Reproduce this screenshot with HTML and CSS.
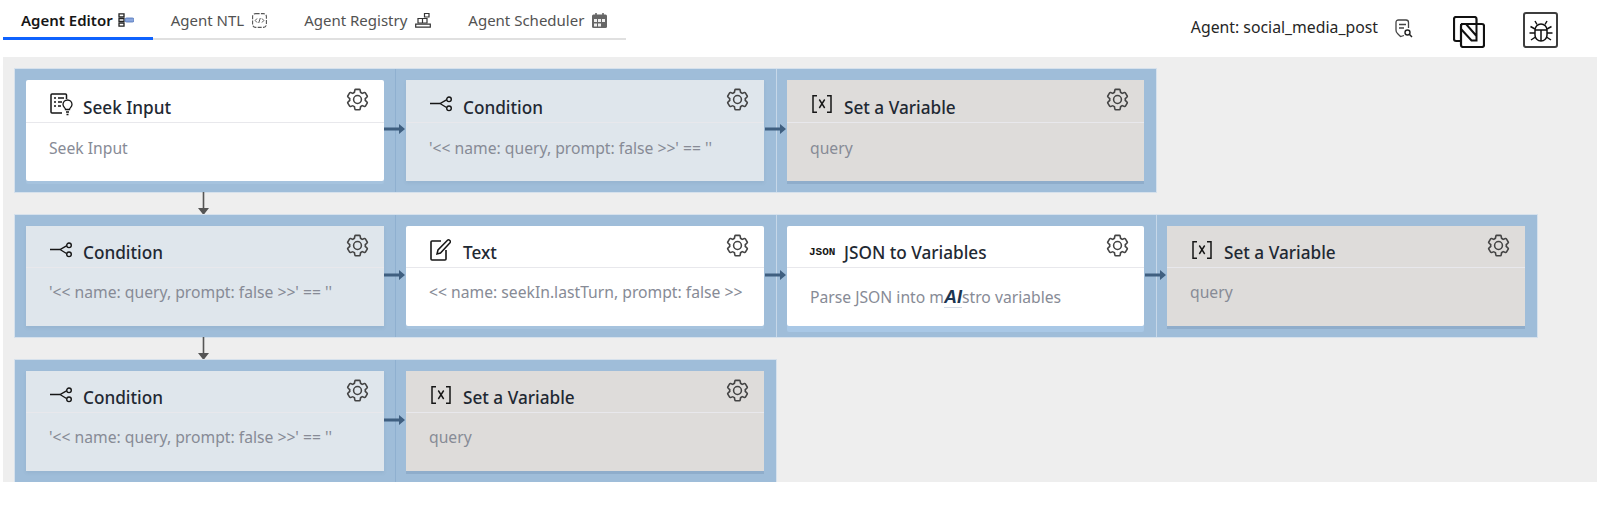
FILE: index.html
```html
<!DOCTYPE html>
<html lang="en">
<head>
    <meta charset="UTF-8">
    <title>Agent Editor</title>
    <link rel="stylesheet" href="styles.css">
</head>
<body>
    <svg class="defs" width="0" height="0">
        <symbol id="gear" viewBox="0 0 32 32">
            <path d="M27,16.76c0-.25,0-.5,0-.76s0-.51,0-.77l1.92-1.68A2,2,0,0,0,29.3,11L26.94,7a2,2,0,0,0-1.73-1,2,2,0,0,0-.64.1l-2.43.82a11.35,11.35,0,0,0-1.31-.75l-.51-2.52a2,2,0,0,0-2-1.61H13.64a2,2,0,0,0-2,1.61l-.51,2.52a11.48,11.48,0,0,0-1.32.75L7.43,6.06A2,2,0,0,0,6.79,6,2,2,0,0,0,5.06,7L2.7,11a2,2,0,0,0,.41,2.51L5,15.24c0,.25,0,.5,0,.76s0,.51,0,.77L3.11,18.45A2,2,0,0,0,2.7,21L5.06,25a2,2,0,0,0,1.73,1,2,2,0,0,0,.64-.1l2.43-.82a11.35,11.35,0,0,0,1.31.75l.51,2.52a2,2,0,0,0,2,1.61h4.72a2,2,0,0,0,2-1.61l.51-2.52a11.48,11.48,0,0,0,1.32-.75l2.42.82a2,2,0,0,0,.64.1,2,2,0,0,0,1.73-1L29.3,21a2,2,0,0,0-.41-2.51ZM25.21,24l-3.43-1.16a8.86,8.86,0,0,1-2.71,1.57L18.36,28H13.64l-.71-3.55a9.36,9.36,0,0,1-2.7-1.57L6.79,24,4.43,20l2.72-2.4a8.9,8.9,0,0,1,0-3.13L4.43,12,6.79,8l3.43,1.16a8.86,8.86,0,0,1,2.71-1.57L13.64,4h4.72l.71,3.55a9.36,9.36,0,0,1,2.7,1.57L25.21,8,27.57,12l-2.72,2.4a8.9,8.9,0,0,1,0,3.13L27.57,20Z"/>
            <path d="M16,22a6,6,0,1,1,6-6A5.94,5.94,0,0,1,16,22Zm0-10a3.91,3.91,0,0,0-4,4,3.91,3.91,0,0,0,4,4,3.91,3.91,0,0,0,4-4A3.91,3.91,0,0,0,16,12Z"/>
        </symbol>
        <symbol id="condition" viewBox="0 0 22 16">
            <path d="M0 7.500h10L16.500 3.800M10 7.500l6.500 4" fill="none" stroke="#161616" stroke-width="1.400"/>
            <circle cx="19" cy="3.300" r="2.300" fill="none" stroke="#161616" stroke-width="1.400"/>
            <circle cx="19" cy="12.300" r="2.300" fill="none" stroke="#161616" stroke-width="1.400"/>
        </symbol>
        <symbol id="variable" viewBox="0 0 20 18">
            <path d="M5 .8H1v16.400h4M15 .8h4v16.400h-4" fill="none" stroke="#161616" stroke-width="1.500"/>
            <path d="M7.300 4.500l5.400 8.500M12.700 4.500l-5.400 8.500" fill="none" stroke="#161616" stroke-width="1.400"/>
        </symbol>
        <symbol id="arrow-right" viewBox="0 0 21 12">
            <path d="M0 4.500h15V1l6 5-6 5V7.500H0z" fill="#3f5f80"/>
        </symbol>
    </svg>

    <header class="topbar">
        <nav class="tabs">
            <div class="tab active">
                <span>Agent Editor</span>
                <svg class="tab-icon" width="16" height="14" viewBox="0 0 16 14">
                    <path d="M1 .8h5v3H1zM1 5.500h5v3H1zM1 10.200h5v3H1z" fill="none" stroke="#222" stroke-width="1.300"/>
                    <rect x="7" y="5" width="9" height="4" rx="1.500" fill="#8aa6dc" stroke="#4a6fb8" stroke-width=".8"/>
                </svg>
            </div>
            <div class="tab">
                <span>Agent NTL</span>
                <svg class="tab-icon" width="15" height="15" viewBox="0 0 15 15">
                    <rect x=".6" y=".6" width="13.800" height="13.800" rx="3" fill="none" stroke="#555" stroke-width="1.100" stroke-dasharray="4 1.300"/>
                    <path d="M5 5.500L3.200 7.500 5 9.500M10 5.500l1.800 2-1.800 2M8.300 5l-1.600 5" fill="none" stroke="#444" stroke-width=".9"/>
                </svg>
            </div>
            <div class="tab">
                <span>Agent Registry</span>
                <svg class="tab-icon" width="16" height="16" viewBox="0 0 16 16">
                    <path d="M3 6.500h4.500V11H3zM7.500 6.500H12V11H7.500zM9.500 1.500H14V5H9.500z" fill="none" stroke="#333" stroke-width="1.200"/>
                    <path d="M.7 15.200v-3h14.600v3z" fill="none" stroke="#333" stroke-width="1.200"/>
                </svg>
            </div>
            <div class="tab">
                <span>Agent Scheduler</span>
                <svg class="tab-icon" width="15" height="15" viewBox="0 0 15 15">
                    <rect x="0" y="1.500" width="15" height="13.500" rx="1.500" fill="#666666"/>
                    <path d="M4 0v3M11 0v3" stroke="#666666" stroke-width="1.600"/>
                    <path d="M2 6h3v3H2zM6 6h3v3H6zM10 6h3v3h-3zM2 10.500h3v3H2zM6 10.500h3v3H6z" fill="#eeeeee"/>
                </svg>
            </div>
        </nav>
        <div class="agent-info">
            <span class="agent-name">Agent: social_media_post</span>
            <svg class="agent-search" width="18" height="19" viewBox="0 0 18 19">
                <path d="M9 16.500L5.500 17.500 2.500 14.500Q1 13.500 1 11V3.500Q1 1 3.500 1H11Q13.500 1 13.500 3.500V9" fill="none" stroke="#444" stroke-width="1.300"/>
                <path d="M4 5.500h7M4 9h5" stroke="#444" stroke-width="1.300"/>
                <circle cx="12.500" cy="13.500" r="2.500" fill="none" stroke="#222" stroke-width="1.400"/>
                <path d="M14.300 15.300l2.700 2.700" stroke="#222" stroke-width="1.500"/>
            </svg>
            <svg class="agent-stack" width="32" height="32" viewBox="0 0 32 32">
                <path d="M7.500 25H3a2 2 0 0 1-2-2V3a2 2 0 0 1 2-2h18.500a2 2 0 0 1 2 2v4.500" fill="none" stroke="#111" stroke-width="2.200"/>
                <rect x="8" y="8" width="23" height="23" rx="2" fill="none" stroke="#111" stroke-width="2.200"/>
                <path d="M8 8h5l10.500 12V8M8 8v5l10.500 11.500h5V20" fill="none" stroke="#111" stroke-width="2"/>
            </svg>
            <div class="agent-bug">
                <svg width="26" height="26" viewBox="0 0 26 26">
                    <path d="M7 13a6 6 0 0 1 12 0v5a6 6 0 0 1-12 0z" fill="none" stroke="#111" stroke-width="1.500"/>
                    <path d="M7 13h12M13 13v11M9 7.500L7 4M17 7.500L19 4M7 12L2.500 9.500M19 12l4.500-2.500M7 16H1.500M19 16h5.500M7.500 20L3 23M18.500 20l4.500 3" fill="none" stroke="#111" stroke-width="1.500"/>
                </svg>
            </div>
        </div>
    </header>

    <main class="canvas">
        <section class="row">
            <div class="cell">
                <article class="card card-white">
                    <div class="card-head">
                        <span class="card-icon">
                            <svg width="24" height="23" viewBox="0 0 24 23">
                                <path d="M12 20H2a1 1 0 0 1-1-1V2a1 1 0 0 1 1-1h13.500a1 1 0 0 1 1 1v4" fill="none" stroke="#161616" stroke-width="1.500"/>
                                <path d="M4 5h2M8 5h6M4 9h2M8 9h4M4 13h2M8 13h3" stroke="#161616" stroke-width="1.500"/>
                                <path d="M15.500 16.500c0-1.500-2.500-2.500-2.500-5a4.500 4.500 0 0 1 9 0c0 2.500-2.500 3.500-2.500 5z" fill="none" stroke="#161616" stroke-width="1.300"/>
                                <path d="M16 19h3M16.500 21.500h2" stroke="#161616" stroke-width="1.300"/>
                            </svg>
                        </span>
                        <h2 class="card-title">Seek Input</h2>
                        <svg class="gear"><use href="#gear"/></svg>
                    </div>
                    <p class="card-text">Seek Input</p>
                </article>
            </div>
            <div class="cell cell-dark">
                <svg class="arrow"><use href="#arrow-right"/></svg>
                <article class="card card-blue">
                    <div class="card-head">
                        <span class="card-icon"><svg class="icon-condition"><use href="#condition"/></svg></span>
                        <h2 class="card-title">Condition</h2>
                        <svg class="gear"><use href="#gear"/></svg>
                    </div>
                    <p class="card-text">'&lt;&lt; name: query, prompt: false &gt;&gt;' == ''</p>
                </article>
            </div>
            <div class="cell">
                <svg class="arrow"><use href="#arrow-right"/></svg>
                <article class="card card-grey">
                    <div class="card-head">
                        <span class="card-icon"><svg class="icon-variable"><use href="#variable"/></svg></span>
                        <h2 class="card-title">Set a Variable</h2>
                        <svg class="gear"><use href="#gear"/></svg>
                    </div>
                    <p class="card-text">query</p>
                </article>
            </div>
        </section>

        <div class="connector"><svg width="11" height="23" viewBox="0 0 11 23"><path d="M4.700 0h1.600v16H11l-5.500 7L0 16h4.700z" fill="#555"/></svg></div>

        <section class="row row-short">
            <div class="cell">
                <article class="card card-blue">
                    <div class="card-head">
                        <span class="card-icon"><svg class="icon-condition"><use href="#condition"/></svg></span>
                        <h2 class="card-title">Condition</h2>
                        <svg class="gear"><use href="#gear"/></svg>
                    </div>
                    <p class="card-text">'&lt;&lt; name: query, prompt: false &gt;&gt;' == ''</p>
                </article>
            </div>
            <div class="cell cell-dark">
                <svg class="arrow"><use href="#arrow-right"/></svg>
                <article class="card card-white">
                    <div class="card-head">
                        <span class="card-icon">
                            <svg width="21" height="23" viewBox="0 0 21 23">
                                <path d="M11 3H2a1 1 0 0 0-1 1v17a1 1 0 0 0 1 1h13a1 1 0 0 0 1-1v-9" fill="none" stroke="#161616" stroke-width="1.600"/>
                                <path d="M7 16l1-4L17.500 2.200a1.400 1.400 0 0 1 2 0l.5.5a1.400 1.400 0 0 1 0 2L10.500 15z" fill="none" stroke="#161616" stroke-width="1.500"/>
                            </svg>
                        </span>
                        <h2 class="card-title">Text</h2>
                        <svg class="gear"><use href="#gear"/></svg>
                    </div>
                    <p class="card-text">&lt;&lt; name: seekIn.lastTurn, prompt: false &gt;&gt;</p>
                </article>
            </div>
            <div class="cell">
                <svg class="arrow"><use href="#arrow-right"/></svg>
                <article class="card card-white card-json">
                    <div class="card-head">
                        <span class="card-icon"><span class="json-icon">JSON</span></span>
                        <h2 class="card-title">JSON to Variables</h2>
                        <svg class="gear"><use href="#gear"/></svg>
                    </div>
                    <p class="card-text">Parse JSON into m<span class="brand">AI</span>stro variables</p>
                </article>
            </div>
            <div class="cell">
                <svg class="arrow"><use href="#arrow-right"/></svg>
                <article class="card card-grey">
                    <div class="card-head">
                        <span class="card-icon"><svg class="icon-variable"><use href="#variable"/></svg></span>
                        <h2 class="card-title">Set a Variable</h2>
                        <svg class="gear"><use href="#gear"/></svg>
                    </div>
                    <p class="card-text">query</p>
                </article>
            </div>
        </section>

        <div class="connector"><svg width="11" height="23" viewBox="0 0 11 23"><path d="M4.700 0h1.600v16H11l-5.500 7L0 16h4.700z" fill="#555"/></svg></div>

        <section class="row row-short">
            <div class="cell">
                <article class="card card-blue">
                    <div class="card-head">
                        <span class="card-icon"><svg class="icon-condition"><use href="#condition"/></svg></span>
                        <h2 class="card-title">Condition</h2>
                        <svg class="gear"><use href="#gear"/></svg>
                    </div>
                    <p class="card-text">'&lt;&lt; name: query, prompt: false &gt;&gt;' == ''</p>
                </article>
            </div>
            <div class="cell cell-dark">
                <svg class="arrow"><use href="#arrow-right"/></svg>
                <article class="card card-grey">
                    <div class="card-head">
                        <span class="card-icon"><svg class="icon-variable"><use href="#variable"/></svg></span>
                        <h2 class="card-title">Set a Variable</h2>
                        <svg class="gear"><use href="#gear"/></svg>
                    </div>
                    <p class="card-text">query</p>
                </article>
            </div>
        </section>
    </main>
</body>
</html>
```

FILE: styles.css
```css
* {
    box-sizing: border-box;
}

body {
    margin: 0;
    background-color: #ffffff;
    font-family: "Noto Sans", "Open Sans", sans-serif;
    color: #161616;
}

.defs {
    display: block;
    height: 0;
}

/* Barra superior */
.topbar {
    display: flex;
    justify-content: space-between;
    height: 57px;
    padding-left: 3px;
}

.tabs {
    display: flex;
    height: 40px;
}

.tab {
    display: flex;
    align-items: center;
    gap: 8px;
    height: 40px;
    padding: 2px 19px 0 18px;
    border-bottom: 2px solid #e0e0e0;
    font-size: 15px;
    color: #525252;
}

.tab.active {
    gap: 5px;
    border-bottom: 3px solid #0f62fe;
    padding-top: 3px;
    font-weight: 600;
    color: #161616;
}

.agent-info {
    display: flex;
    align-items: flex-start;
    padding-right: 39px;
}

.agent-name {
    margin-top: 16px;
    font-size: 15.800px;
    line-height: 22px;
    color: #262626;
}

.agent-search {
    margin: 19px 0 0 17px;
}

.agent-stack {
    margin: 16px 0 0 40px;
}

.agent-bug {
    display: flex;
    align-items: center;
    justify-content: center;
    width: 35px;
    height: 36px;
    margin: 12px 0 0 38px;
    border: 2px solid #3d3d3d;
    border-radius: 3px;
}

/* Lienzo */
.canvas {
    display: flex;
    flex-direction: column;
    align-items: flex-start;
    margin-left: 3px;
    padding: 12px 12px 0;
    background-color: #eeeeee;
    box-shadow: 0 8px 14px rgba(0, 0, 0, 0.015);
}

.row {
    display: flex;
    background-color: #9fbdd9;
    box-shadow: 0 0 0 1px #d6e1ec;
}

.cell {
    position: relative;
    width: 381px;
    padding: 11px 12px 11px 10px;
    border-left: 1px solid #c6d7e8;
}

.cell:first-child {
    width: 380px;
    padding: 11px;
    border-left: 0;
}

.cell:nth-child(3) {
    width: 380px;
}

.cell-dark {
    border-left-color: #8fb0d0;
}

.arrow {
    position: absolute;
    z-index: 1;
    top: 54px;
    left: -12px;
    width: 21px;
    height: 12px;
}

.connector {
    display: flex;
    height: 23px;
    padding-left: 183px;
}

/* Tarjetas */
.card {
    height: 101px;
}

.row-short .card {
    height: 100px;
}

.card-white {
    background-color: #ffffff;
    border-radius: 2px;
    box-shadow: 0 3px 0 #a6c3de;
}

.card-json {
    box-shadow: 0 6px 0 #a9c8e6;
}

.card-blue {
    background-color: #dfe6ec;
    box-shadow: 0 2px 3px rgba(90, 120, 150, 0.12);
}

.card-grey {
    background-color: #dedcda;
    box-shadow: 0 3px 0 #8fadcb;
}

.card-head {
    display: flex;
    align-items: center;
    height: 43px;
    padding: 6px 0 0 24px;
    border-bottom: 1px solid #e8e8ec;
}

.row-short .card-head {
    height: 42px;
}

.card-icon {
    display: flex;
    align-items: center;
    flex: none;
    width: 33px;
}

.icon-condition {
    width: 22px;
    height: 16px;
}

.icon-variable {
    width: 20px;
    height: 18px;
    margin-left: 1px;
}

.json-icon {
    margin: 4px 0 0 -2px;
    font-family: "Liberation Mono", monospace;
    font-size: 11px;
    font-weight: 700;
    line-height: 12px;
}

.card-title {
    flex: 1;
    margin: 6px 0 0;
    font-size: 17.200px;
    font-weight: 500;
    color: #1f2933;
}

.gear {
    flex: none;
    align-self: flex-start;
    width: 25px;
    height: 25px;
    margin: 1px 14px 0 0;
    fill: #444444;
}

.card-text {
    margin: 0;
    padding: 14px 0 0 23px;
    font-size: 15.700px;
    line-height: 22px;
    color: #878b96;
}

.row-short .card-text {
    padding-top: 13px;
}

.row-short .card-json .card-text {
    padding-top: 18px;
}

.brand {
    display: inline-block;
    height: 21px;
    font-family: "Liberation Sans", sans-serif;
    font-size: 18px;
    font-weight: 700;
    font-style: italic;
    line-height: 20px;
    color: #1c3550;
    border-bottom: 1px solid #d5dbe4;
}
```
